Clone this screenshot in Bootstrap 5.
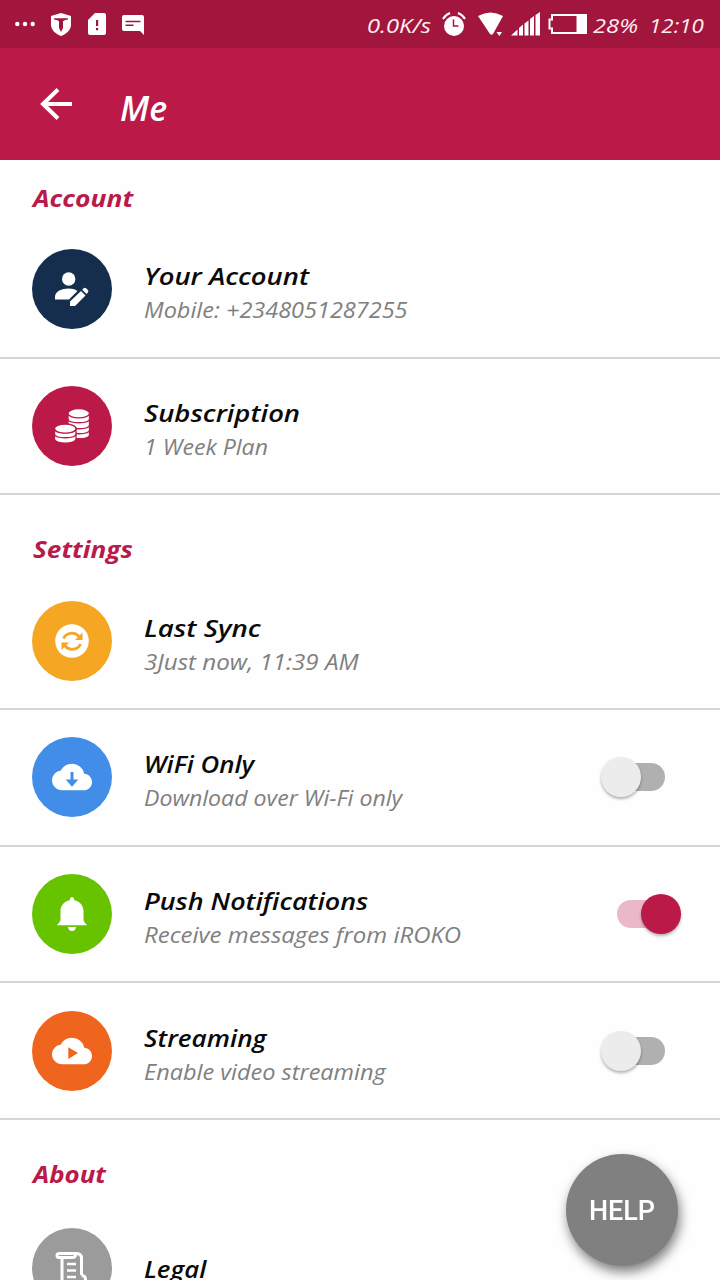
<!DOCTYPE html>
<html lang="en">
<head>
<meta charset="utf-8">
<meta name="viewport" content="width=device-width, initial-scale=1">
<title>Me</title>
<link rel="stylesheet" href="https://cdn.jsdelivr.net/npm/bootstrap@5.3.0/dist/css/bootstrap.min.css">
<style>
  :root { --brand: #bb1948; --brand-dark: #a2163d; }
  body { width: 720px; height: 1280px; overflow: hidden; background: #fefefe; font-family: "Open Sans", "Noto Sans", sans-serif; font-style: italic; }
  svg { display: block; flex: none; fill: currentColor; }
  .status-bar { height: 48px; padding: 0 16px 0 15px; background: var(--brand-dark); color: #fdeef2; font-size: 20px; line-height: 48px; white-space: nowrap; }
  .status-bar svg { color: #fff; }
  .status-text { flex: none; padding-top: 4px; }
  .app-bar { height: 112px; padding-left: 40px; background: var(--brand); }
  .app-title { margin: 8px 0 0 48px; font-size: 34px; font-weight: 600; line-height: 40px; }
  .section-title { height: 78px; margin: 0; padding: 0 32px 10px 33px; color: var(--brand); font-size: 24px; font-weight: 700; line-height: 28px; }
  .section-first { height: 62px; }
  .section-last { height: 81px; padding-bottom: 13px; }
  .setting { height: 136.67px; padding: 27.4px 32px 0; border-bottom: 2px solid #d6d6d6; white-space: nowrap; }
  .disc { width: 80px; height: 80px; margin-right: 32px; }
  .setting-name { padding-top: 9px; color: #0a0a0a; font-size: 24px; font-weight: 600; line-height: 35px; }
  .setting-note { color: #808080; font-size: 21px; line-height: 34px; }
  .solo { padding-top: 23px; }
  /* widened lettering, in percent */
  [class*="wide-"] { transform-origin: 0 50%; }
  .wide-108 { transform: scaleX(1.075); }
  .wide-109 { transform: scaleX(1.088); }
  .wide-110 { transform: scaleX(1.1); }
  .wide-112 { transform: scaleX(1.118); }
  .wide-114 { transform: scaleX(1.142); }
  .wide-115 { transform: scaleX(1.15); }
  .wide-119 { transform: scaleX(1.187); }
  .form-check-input.toggle { position: relative; flex: none; width: 64px; height: 40px; margin: 20px 23px 0 auto; padding: 0; border: 0; background: none; box-shadow: none; }
  .toggle::before, .toggle::after { content: ""; position: absolute; }
  .toggle::before { top: 6px; left: 8px; right: 0; height: 28px; border-radius: 14px; background: #b0b0b0; }
  .toggle::after { top: 0; left: 0; width: 40px; height: 40px; border-radius: 50%; background: #ececec; box-shadow: 0 2px 3px rgba(0,0,0,.3); }
  .form-check-input.toggle:checked { margin-right: 7px; background: none; }
  .toggle:checked::before { left: 0; right: 8px; background: #ebb8ca; }
  .toggle:checked::after { left: 24px; background: var(--brand); }
  .help-btn { right: 42px; bottom: 14px; width: 112px; height: 112px; background: #808080; box-shadow: 2px 6px 12px rgba(0,0,0,.5); font: 500 27px Roboto, sans-serif; }
  .help-btn span { position: relative; top: 1px; }
</style>
</head>
<body>
<header class="text-white">
  <div class="status-bar d-flex align-items-center">
    <svg width="20" height="24" viewBox="0 0 20 24"><circle cx="2.3" cy="12" r="2.2"/><circle cx="10" cy="12" r="2.2"/><circle cx="17.7" cy="12" r="2.2"/></svg>
    <svg style="margin-left:16px" width="20" height="24" viewBox="0 0 20 24"><path d="M10 1l10 3v9c0 5-5 9-10 11C5 22 0 18 0 13V4z"/><path fill="#a2163d" d="M3 6.300h14v1.200c-2 .2-3.500.5-5 1.700V16l-2 4-2-4V9.200C6.500 8 5 7.700 3 7.500z"/></svg>
    <svg style="margin-left:17px" width="18" height="24" viewBox="0 0 18 24"><path d="M7 1h9q2 0 2 2v18q0 2-2 2H2q-2 0-2-2V8z"/><path fill="#a2163d" d="M8 8h2.200v6H8zM8 16h2.200v2.300H8z"/></svg>
    <svg style="margin-left:16px" width="22" height="24" viewBox="0 0 22 24"><path d="M2 3h18q2 0 2 2v18l-4-4H2q-2 0-2-2V5q0-2 2-2z"/><path stroke="#a2163d" stroke-width="1.500" d="M3.500 9.400h15M3.500 13.300h8"/></svg>
    <span class="status-text wide-119 ms-auto" style="width:64px">0.0K/s</span>
    <svg style="margin-left:11px" width="24" height="26" viewBox="0 0 24 26"><circle cx="12" cy="15" r="10"/><path fill="none" stroke="#fff" stroke-width="2" d="M1 8q2-4 7-6M23 8q-2-4-7-6"/><path fill="none" stroke="#a2163d" stroke-width="1.500" d="M11.500 8.500V15h5"/></svg>
    <svg style="margin-left:12px" width="26" height="26" viewBox="0 0 26 26"><path d="M0 5q12.500-7 25 0L15 23q-1.500 1.500-3 0zM18.500 21H24l-2.700 4z"/></svg>
    <svg style="margin-left:7px" width="29" height="26" viewBox="0 0 29 26"><path d="M0 24.500l6.500-6v6zM8 17l4-3.500v11H8zM13.500 12.500l4-3v15h-4zM19 8l4-3v19.500h-4zM24.500 4L29 1v23.500h-4.500z"/></svg>
    <svg style="margin-left:8px" width="40" height="24" viewBox="0 0 40 24"><path fill="none" stroke="#fff" stroke-width="2" d="M4 3h34v18H4v-4.500H1.500v-9H4z"/><path d="M28.500 2H39v20H28.500z"/></svg>
    <span class="status-text wide-119" style="width:45px;margin-left:5px">28%</span>
    <span class="status-text wide-112" style="width:55px;margin-left:11px">12:10</span>
  </div>
  <div class="app-bar d-flex align-items-center">
    <svg width="32" height="34" viewBox="0 0 32 34"><path fill="none" stroke="#fff" stroke-width="4" d="M32 17H3M18 2.500L3 17l15 14.500"/></svg>
    <h1 class="app-title">Me</h1>
  </div>
</header>

<main>
  <h2 class="section-title section-first d-flex align-items-end"><span class="wide-110">Account</span></h2>
  <div class="setting d-flex align-items-start">
    <svg class="disc" viewBox="0 0 80 80"><circle cx="40" cy="40" r="40" fill="#152e4d"/><g fill="#fff"><circle cx="36.700" cy="30" r="6.700"/><path d="M23 50.500v-2.500c0-9 17-10.500 22.500-6l-8.500 8.500zM38 57v-4.500l11-10.500 4.500 4.500L43 57zM50.200 40.800l1.500-1.500q1.300-1 2.400 0l1.800 1.800q1.100 1.300 0 2.500l-1.400 1.500z"/></g></svg>
    <div><div class="setting-name wide-114">Your Account</div><div class="setting-note wide-112">Mobile: +2348051287255</div></div>
  </div>
  <div class="setting d-flex align-items-start">
    <svg class="disc" viewBox="0 0 80 80"><circle cx="40" cy="40" r="40" fill="#bb1948"/><g fill="#fff" stroke="#bb1948" stroke-width="1.300">
      <path d="M36 47v2c0 5 21.500 5 21.500 0v-5H36z"/><path d="M36 40v4c0 5 21.500 5 21.500 0v-5H36z"/><path d="M36 34v5c0 5 21.500 5 21.500 0v-5H36z"/><path d="M36 28v5c0 5 21.500 5 21.500 0v-5H36z"/><ellipse cx="46.750" cy="27.300" rx="10.750" ry="4.600"/>
      <path d="M22.500 47v6c0 5.500 21.500 5.500 21.500 0v-6z"/><path d="M22.500 43v5c0 5 21.500 5 21.500 0v-5z"/><path d="M22.500 42v1c0 5 21.500 5 21.500 0v-1z"/><ellipse cx="33.250" cy="42.600" rx="10.750" ry="4.600"/></g></svg>
    <div><div class="setting-name wide-114">Subscription</div><div class="setting-note wide-110">1 Week Plan</div></div>
  </div>

  <h2 class="section-title d-flex align-items-end"><span class="wide-109">Settings</span></h2>
  <div class="setting d-flex align-items-start">
    <svg class="disc" viewBox="0 0 80 80"><circle cx="40" cy="40" r="40" fill="#f5a623"/><circle cx="40" cy="40" r="16.800" fill="#fff"/><g fill="none" stroke="#f5a623" stroke-width="2.800"><path d="M31.500 37.500c2.500-6 11-7.200 15.500-2"/><path d="M48.500 43c-2.500 6-11 7.200-15.500 2"/></g><path fill="#f5a623" d="M50.500 31.500v7.500H43zM29.500 49v-7.500H37z"/></svg>
    <div><div class="setting-name wide-115">Last Sync</div><div class="setting-note wide-115">3Just now, 11:39 AM</div></div>
  </div>
  <div class="setting d-flex align-items-start">
    <svg class="disc" viewBox="0 0 80 80"><circle cx="40" cy="40" r="40" fill="#418de8"/><path fill="#fff" transform="translate(20 20) scale(1.667)" d="M19.350 10.040A7.490 7.490 0 0 0 12 4C9.110 4 6.600 5.640 5.350 8.040A5.994 5.994 0 0 0 0 14c0 3.310 2.690 6 6 6h13c2.760 0 5-2.240 5-5 0-2.640-2.050-4.780-4.650-4.960z"/><path fill="#418de8" d="M38.500 35h3v7.500h4.800L40 49.700l-6.300-7.200h4.800z"/></svg>
    <div><div class="setting-name wide-108">WiFi Only</div><div class="setting-note wide-110">Download over Wi-Fi only</div></div>
    <input class="form-check-input toggle" type="checkbox" role="switch" aria-label="WiFi Only">
  </div>
  <div class="setting d-flex align-items-start">
    <svg class="disc" viewBox="0 0 80 80"><circle cx="40" cy="40" r="40" fill="#67c300"/><path fill="#fff" d="M37.800 25.500q0-2.200 2.200-2.200t2.200 2.200v.8c6 1.200 9.300 5.500 9.300 11V46q.3 2 3.800 5.300H24.700Q28.200 48 28.500 46v-8.700c0-5.500 3.300-9.800 9.300-11zM36 53h8q-.5 4-4 4t-4-4z"/></svg>
    <div><div class="setting-name wide-112">Push Notifications</div><div class="setting-note wide-114">Receive messages from iROKO</div></div>
    <input class="form-check-input toggle" type="checkbox" role="switch" aria-label="Push Notifications" checked>
  </div>
  <div class="setting d-flex align-items-start">
    <svg class="disc" viewBox="0 0 80 80"><circle cx="40" cy="40" r="40" fill="#f0651d"/><path fill="#fff" transform="translate(20 20) scale(1.667)" d="M19.350 10.040A7.490 7.490 0 0 0 12 4C9.110 4 6.600 5.640 5.350 8.040A5.994 5.994 0 0 0 0 14c0 3.310 2.690 6 6 6h13c2.760 0 5-2.240 5-5 0-2.640-2.050-4.780-4.650-4.960z"/><path fill="#f0651d" d="M36.300 36.300v11.600L46 42.100z"/></svg>
    <div><div class="setting-name wide-109">Streaming</div><div class="setting-note wide-112">Enable video streaming</div></div>
    <input class="form-check-input toggle" type="checkbox" role="switch" aria-label="Streaming">
  </div>

  <h2 class="section-title section-last d-flex align-items-end"><span class="wide-108">About</span></h2>
  <div class="setting d-flex align-items-start">
    <svg class="disc" viewBox="0 0 80 80"><circle cx="40" cy="40" r="40" fill="#9b9b9b"/><g fill="none" stroke="#fff" stroke-width="3" stroke-linejoin="round"><path d="M41 29.500H27q-2 0-2-2t2-2h17.500q5 0 5 5V47M41 29.500q2.500-.2 2.500-3M30 29.500V54h18M49.500 47.500q4 0 4 4t-5 4"/><path stroke-width="2.300" d="M35 36h9M35 42.500h9M35 49h9"/></g></svg>
    <div class="setting-name solo wide-108">Legal</div>
  </div>
</main>
<button class="help-btn btn rounded-circle position-fixed text-white p-0 border-0" type="button"><span>HELP</span></button>
<script src="https://cdn.jsdelivr.net/npm/bootstrap@5.3.0/dist/js/bootstrap.bundle.min.js"></script>
</body>
</html>
